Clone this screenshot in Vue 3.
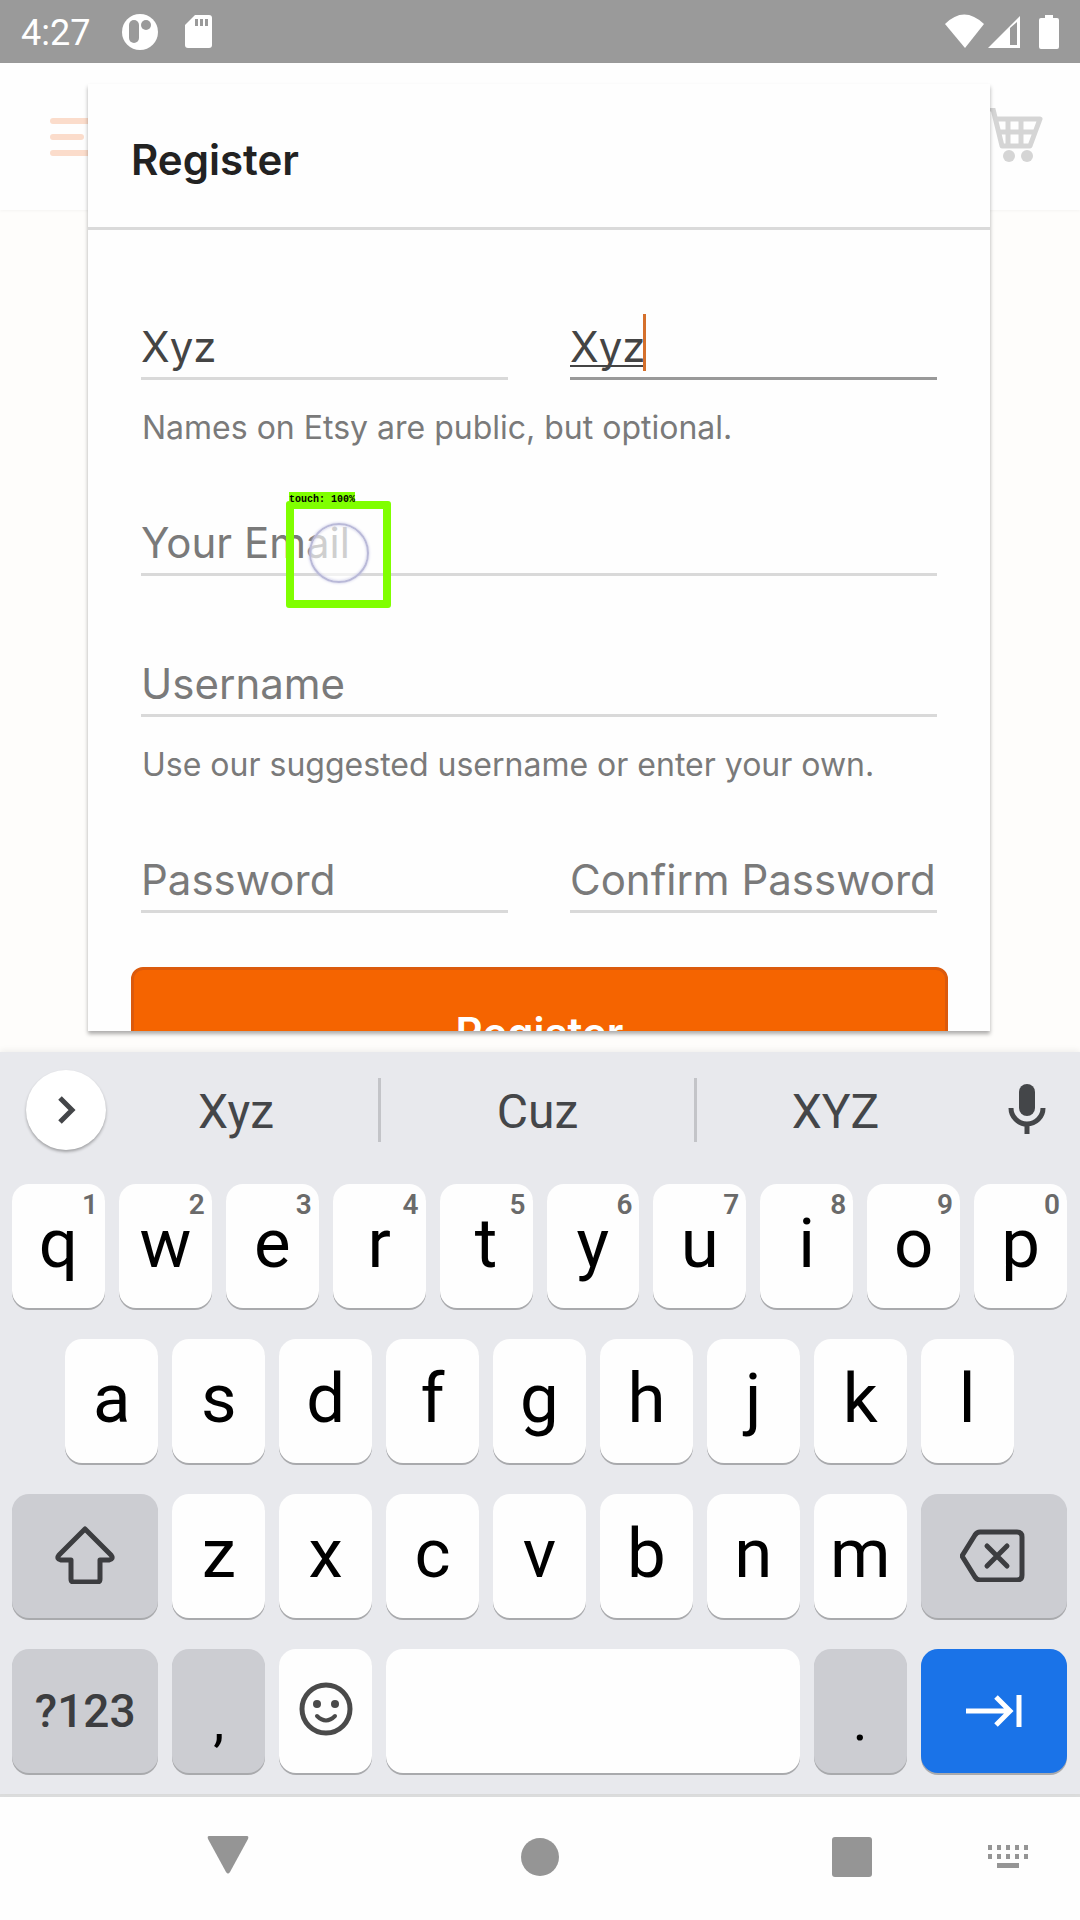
<script setup>
import { reactive } from 'vue'

const form = reactive({ first: 'Xyz', last: 'Xyz', email: '', username: '', password: '', confirm: '' })

const suggestions = ['Xyz', 'Cuz', 'XYZ']
const topRow = 'qwertyuiop'.split('').map((letter, i) => ({ letter, hint: (i + 1) % 10 }))
const homeRow = 'asdfghjkl'.split('')
const bottomRow = 'zxcvbnm'.split('')
const keypadDots = [0, 1, 2, 3, 4]
</script>

<template>
  <div class="screen">
    <header class="status">
      <span class="clock">4:27</span>
      <svg class="badge-icon" width="36" height="36" viewBox="0 0 36 36">
        <circle cx="18" cy="18" r="18" fill="#fff" />
        <rect x="7" y="6" width="10" height="23" rx="5" fill="#9a9a9a" />
        <circle cx="24" cy="11" r="5" fill="#9a9a9a" />
      </svg>
      <svg class="card-icon" width="28" height="34" viewBox="0 0 28 34">
        <path d="M10 0H24Q27 0 27 3V30Q27 33 24 33H3Q0 33 0 30V10Z" fill="#fff" />
        <path d="M10 4h3v7h-3zM15 4h3v7h-3zM20 4h3v7h-3z" fill="#9a9a9a" />
      </svg>
      <svg class="system-icons" width="116" height="36" viewBox="0 0 116 36" fill="#fff">
        <path d="M1 10Q20 -9 40 10L21 34Z" />
        <path fill-rule="evenodd" d="M44 34L76 2V34ZM66 14V31H73V8Z" />
        <path d="M101 1h8v3h4q2 0 2 2v27q0 2-2 2H97q-2 0-2-2V6q0-2 2-2h4z" />
      </svg>
    </header>

    <main class="stage">
      <div class="appbar">
        <svg width="56" height="40" viewBox="0 0 56 40" stroke="#fbdccb" stroke-width="6" stroke-linecap="round">
          <path d="M3 4H50M3 20H31M3 36H50" />
        </svg>
        <svg width="60" height="58" viewBox="0 0 60 58">
          <g fill="none" stroke="#d5d5d5" stroke-width="5" stroke-linejoin="round" stroke-linecap="round">
            <path d="M0 1H9L18 38H46L56 11H12M15 24H51M24 11V38M37 11V38" />
          </g>
          <circle cx="25" cy="48" r="6" fill="#d5d5d5" />
          <circle cx="43" cy="48" r="6" fill="#d5d5d5" />
        </svg>
      </div>

      <section class="dialog" role="dialog" aria-labelledby="dialog-title">
        <h1 id="dialog-title" class="title">Register</h1>
        <form class="form" @submit.prevent>
          <div class="row">
            <div class="field">
              <input v-model="form.first" type="text" aria-label="First name" />
            </div>
            <div class="field focused">
              <input v-model="form.last" type="text" aria-label="Last name" />
              <i class="caret"></i>
            </div>
          </div>
          <p class="help">Names on Etsy are public, but optional.</p>
          <div class="row">
            <div class="field">
              <input v-model="form.email" type="email" placeholder="Your Email" aria-label="Your Email" />
              <div class="touch">
                <span class="touch-label">touch: 100%</span>
                <i class="touch-ring"></i>
              </div>
            </div>
          </div>
          <div class="row">
            <div class="field">
              <input v-model="form.username" type="text" placeholder="Username" aria-label="Username" />
            </div>
          </div>
          <p class="help">Use our suggested username or enter your own.</p>
          <div class="row">
            <div class="field">
              <input v-model="form.password" type="password" placeholder="Password" aria-label="Password" />
            </div>
            <div class="field">
              <input v-model="form.confirm" type="password" placeholder="Confirm Password" aria-label="Confirm Password" />
            </div>
          </div>
          <button class="submit" type="submit">Register</button>
        </form>
      </section>
    </main>

    <section class="keyboard" aria-label="Keyboard">
      <div class="suggestions">
        <button class="expand" type="button" aria-label="More">
          <svg width="20" height="32" viewBox="0 0 20 32" fill="none" stroke="#444649" stroke-width="5">
            <path d="M4 4L16 16L4 28" />
          </svg>
        </button>
        <button v-for="word in suggestions" :key="word" class="suggestion" type="button">{{ word }}</button>
        <button class="mic" type="button" aria-label="Voice input">
          <svg width="38" height="52" viewBox="0 0 38 52">
            <rect x="11" y="0" width="16" height="32" rx="8" fill="#444649" />
            <path d="M3 24A16 16 0 0 0 35 24M19 40V50" fill="none" stroke="#444649" stroke-width="5" />
          </svg>
        </button>
      </div>

      <div class="keys">
        <button v-for="key in topRow" :key="key.letter" class="key" type="button">
          {{ key.letter }}<span class="hint">{{ key.hint }}</span>
        </button>

        <button
          v-for="(letter, i) in homeRow"
          :key="letter"
          class="key"
          :class="{ indent: i === 0 }"
          type="button"
        >{{ letter }}</button>

        <button class="key wide gray row-start" type="button" aria-label="Shift">
          <svg width="62" height="60" viewBox="0 0 62 60" fill="none" stroke="#3c3d40" stroke-width="5" stroke-linejoin="round">
            <path d="M31 5L5 31Q2 35 7 36H17V55Q17 58 20 58H43Q46 58 46 55V36H55Q60 35 57 31Z" />
          </svg>
        </button>
        <button v-for="letter in bottomRow" :key="letter" class="key" type="button">{{ letter }}</button>
        <button class="key wide gray" type="button" aria-label="Delete">
          <svg width="68" height="56" viewBox="0 0 68 56" fill="none" stroke="#3c3d40" stroke-width="5" stroke-linejoin="round" stroke-linecap="round">
            <path d="M20 6H57Q62 6 62 11V49Q62 54 57 54H20Q17 54 15 51L2 30L15 9Q17 6 20 6Z" />
            <path d="M27 20L47 40M47 20L27 40" />
          </svg>
        </button>

        <button class="key wide gray symbols" type="button">?123</button>
        <button class="key gray mark" type="button">,</button>
        <button class="key" type="button" aria-label="Emoji">
          <svg width="54" height="54" viewBox="0 0 54 54">
            <circle cx="27" cy="27" r="24" fill="none" stroke="#4a4a4a" stroke-width="5" />
            <circle cx="18" cy="22" r="4" fill="#4a4a4a" />
            <circle cx="36" cy="22" r="4" fill="#4a4a4a" />
            <path d="M18 34Q27 43 36 34" fill="none" stroke="#4a4a4a" stroke-width="4" stroke-linecap="round" />
          </svg>
        </button>
        <button class="key space" type="button" aria-label="Space"></button>
        <button class="key gray mark" type="button">.</button>
        <button class="key wide next" type="button" aria-label="Next field">
          <svg width="56" height="34" viewBox="0 0 56 34" fill="none" stroke="#fff" stroke-width="5">
            <path d="M0 17H45M30 3L44 17L30 31M53 1V33" />
          </svg>
        </button>
      </div>
    </section>

    <nav class="navbar">
      <button class="back" type="button" aria-label="Back">
        <svg width="42" height="44" viewBox="0 0 42 44" fill="#959595">
          <path d="M2 1H40Q42 1 41 4L23 37Q21 40 19 37L1 4Q0 1 2 1Z" />
        </svg>
      </button>
      <button type="button" aria-label="Home">
        <svg width="40" height="40" viewBox="0 0 40 40" fill="#959595"><circle cx="20" cy="20" r="19" /></svg>
      </button>
      <button type="button" aria-label="Recent apps">
        <svg width="40" height="40" viewBox="0 0 40 40" fill="#959595"><rect width="40" height="40" rx="3" /></svg>
      </button>
      <button type="button" aria-label="Switch keyboard">
        <svg width="40" height="24" viewBox="0 0 40 24" fill="#959595">
          <template v-for="n in keypadDots" :key="n">
            <rect :x="n * 9" y="0" width="4" height="5" />
            <rect :x="n * 9" y="9" width="4" height="5" />
          </template>
          <rect x="9" y="18" width="22" height="5" />
        </svg>
      </button>
    </nav>
  </div>
</template>

<style>
body {
  margin: 0;
  background: #fdfdfd;
}
</style>

<style scoped>
.screen {
  display: flex;
  flex-direction: column;
  height: 100vh;
  font-family: Roboto, "Liberation Sans", sans-serif;
}

.screen * {
  box-sizing: border-box;
}

button {
  padding: 0;
  border: 0;
  background: none;
  font-family: inherit;
}

svg {
  display: block;
}

.status {
  display: flex;
  align-items: center;
  flex: none;
  height: 63px;
  padding: 0 20px 0 21px;
  background: #9a9a9a;
  color: #fff;
}

.clock {
  padding-top: 2px;
  font-size: 36px;
  line-height: 42px;
}

.badge-icon {
  margin-left: 32px;
}

.card-icon {
  margin-left: 27px;
}

.system-icons {
  margin-left: auto;
}

.stage {
  position: relative;
  flex: 1;
  min-height: 0;
  background: #fefdfb;
}

.appbar {
  display: flex;
  align-items: center;
  justify-content: space-between;
  height: 147px;
  padding: 0 36px 0 50px;
  background: #fefefe;
  box-shadow: 0 1px 3px rgba(0, 0, 0, 0.04);
}

.dialog {
  position: absolute;
  inset: 21px 90px 21px 88px;
  overflow: hidden;
  background: #fefefe;
  box-shadow: 0 3px 4px rgba(0, 0, 0, 0.32);
  font-family: Inter, "Liberation Sans", sans-serif;
}

.title {
  margin: 0;
  padding: 52px 43px 43px;
  border-bottom: 3px solid #dadada;
  color: #222;
  font-size: 42px;
  font-weight: 600;
  line-height: 48px;
}

.form {
  padding: 87px 42px 0 43px;
}

.row {
  display: flex;
  gap: 62px;
  margin-bottom: 78px;
  padding: 0 11px 0 10px;
}

.field {
  position: relative;
  flex: 1;
  min-width: 0;
}

.field input {
  display: block;
  width: 100%;
  height: 63px;
  padding: 0 0 2px;
  border: 0;
  border-bottom: 3px solid #d9d9d9;
  border-radius: 0;
  outline: 0;
  background: none;
  color: #444;
  font-family: inherit;
  font-size: 42px;
}

.field input::placeholder {
  color: #7a7a7a;
  opacity: 1;
}

.focused input {
  border-bottom-color: #999;
  text-decoration: underline 2px;
  text-decoration-skip-ink: none;
  text-underline-offset: 3px;
}

.caret {
  position: absolute;
  top: -3px;
  left: 73px;
  width: 3px;
  height: 57px;
  background: #d5702c;
}

.help {
  height: 55px;
  margin: -78px 10px 78px;
  padding: 28px 1px 0;
  color: #7a7a7a;
  font-size: 32px;
  line-height: 40px;
  white-space: nowrap;
}

.touch {
  position: absolute;
  top: -12px;
  left: 145px;
  width: 105px;
  height: 107px;
  border: 8px solid #80ff00;
  border-radius: 3px;
}

.touch-label {
  position: absolute;
  top: -17px;
  left: -5px;
  padding-top: 2px;
  background: #80ff00;
  color: #000;
  font: bold 10px/12px "Liberation Mono", monospace;
}

.touch-ring {
  position: absolute;
  top: 14px;
  left: 15px;
  width: 60px;
  height: 60px;
  border: 2px solid #b9b9d8;
  border-radius: 50%;
  background: rgba(254, 254, 254, 0.65);
  box-shadow: 0 0 3px #c4c4e4, inset 0 0 3px #c4c4e4;
}

.submit {
  display: block;
  width: 100%;
  height: 130px;
  margin-top: -24px;
  border: 3px solid #db5a0c;
  border-radius: 12px;
  background: #f56400;
  color: #fff;
  font-size: 42px;
  font-weight: 600;
}

.keyboard {
  flex: none;
  background: #e8e9ed;
  box-shadow: 0 -2px 6px rgba(0, 0, 0, 0.06);
  position: relative;
}

.suggestions {
  display: grid;
  grid-template-columns: 94px 284fr 316fr 280fr 106px;
  align-items: center;
  height: 116px;
}

.expand {
  display: grid;
  place-items: center;
  justify-self: end;
  width: 80px;
  height: 80px;
  margin-right: -12px;
  border-radius: 50%;
  background: #fff;
  box-shadow: 0 2px 3px rgba(0, 0, 0, 0.3);
}

.suggestion {
  height: 64px;
  padding-top: 2px;
  color: #444649;
  font-size: 48px;
}

.suggestion + .suggestion {
  border-left: 3px solid #c3c4c8;
}

.mic {
  display: grid;
  place-items: center;
}

.keys {
  display: grid;
  grid-template-columns: repeat(20, 1fr);
  grid-auto-rows: 124px;
  gap: 31px 14px;
  padding: 16px 13px 21px 12px;
}

.key {
  position: relative;
  display: flex;
  align-items: center;
  justify-content: center;
  grid-column: span 2;
  min-width: 0;
  padding-bottom: 4px;
  border-radius: 17px;
  background: #fefefe;
  box-shadow: 0 2px 0 #a9aaad;
  color: #000;
  font-size: 69px;
  line-height: 80px;
}

.key.indent {
  grid-column: 2 / span 2;
}

.key.wide {
  grid-column: span 3;
}

.key.row-start {
  grid-column: 1 / span 3;
}

.key.space {
  grid-column: span 8;
}

.key.gray {
  background: #cccdd2;
}

.key.symbols {
  padding-bottom: 0;
  color: #3c3d40;
  font-size: 46px;
  font-weight: 500;
}

.key.mark {
  padding-top: 24px;
  font-size: 56px;
}

.key.next {
  padding-bottom: 0;
  background: #1a73e8;
}

.hint {
  position: absolute;
  top: 4px;
  right: 7px;
  color: #6a6a6a;
  font-size: 28px;
  font-weight: 600;
  line-height: 34px;
}

.navbar {
  display: grid;
  flex: none;
  grid-template-columns: 168fr 456fr 168fr 144fr;
  place-items: center;
  height: 126px;
  padding-bottom: 4px;
  padding-left: calc(100% * 2 / 15);
  border-top: 3px solid #dcdddd;
  background: #fefefe;
}
</style>
